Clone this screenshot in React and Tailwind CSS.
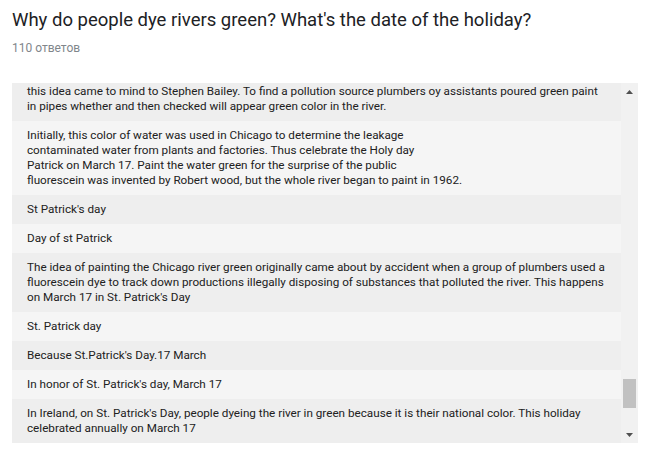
import React from "react";

const rows = [
  ["this idea came to mind to Stephen Bailey. To find a pollution source plumbers oy assistants poured green paint", "in pipes whether and then checked will appear green color in the river."],
  ["Initially, this color of water was used in Chicago to determine the leakage", "contaminated water from plants and factories. Thus celebrate the Holy day", "Patrick on March 17. Paint the water green for the surprise of the public", "fluorescein was invented by Robert wood, but the whole river began to paint in 1962."],
  ["St Patrick's day"],
  ["Day of st Patrick"],
  ["The idea of painting the Chicago river green originally came about by accident when a group of plumbers used a", "fluorescein dye to track down productions illegally disposing of substances that polluted the river. This happens", "on March 17 in St. Patrick's Day"],
  ["St. Patrick day"],
  ["Because St.Patrick's Day.17 March"],
  ["In honor of St. Patrick's day, March 17"],
  ["In Ireland, on St. Patrick's Day, people dyeing the river in green because it is their national color. This holiday", "celebrated annually on March 17"],
];

export default function App() {
  return (
    <div className="w-[657px] h-[450px] bg-white font-['Roboto',sans-serif] text-[#202124] overflow-hidden">
      <div className="pl-3 pt-[6px]">
        <h1 className="text-[18.5px] leading-[28px] font-normal text-[#202124]">
          Why do people dye rivers green? What's the date of the holiday?
        </h1>
        <div className="text-[12px] leading-[16px] mt-[6px] text-[#80868b]">110 ответов</div>
      </div>
      <div className="ml-3 mt-[27px] w-[626px] h-[360px] flex">
        <div className="flex-1 overflow-hidden">
          <div className="-mt-[6px]">
            {rows.map((lines, i) => (
              <div
                key={i}
                className={`${i % 2 === 0 ? "bg-[#eeeeee]" : "bg-[#f5f5f5]"} pl-[15px] pr-2 py-[7px] text-[11.7px] leading-[15px] text-[#212121]`}
              >
                {lines.map((l, j) => (
                  <div key={j} className="whitespace-nowrap">{l}</div>
                ))}
              </div>
            ))}
          </div>
        </div>
        <div className="w-[17px] bg-[#f1f1f1] flex flex-col items-center">
          <div className="h-[17px] w-full flex items-center justify-center">
            <svg width="7" height="4" viewBox="0 0 7 4"><polygon points="3.5,0 7,4 0,4" fill="#505050" /></svg>
          </div>
          <div className="flex-1 w-full flex flex-col">
            <div className="h-[279px]" />
            <div className="mx-[2px] h-[29px] bg-[#c1c1c1]" />
          </div>
          <div className="h-[17px] w-full flex items-center justify-center">
            <svg width="7" height="4" viewBox="0 0 7 4"><polygon points="0,0 7,0 3.5,4" fill="#505050" /></svg>
          </div>
        </div>
      </div>
    </div>
  );
}
